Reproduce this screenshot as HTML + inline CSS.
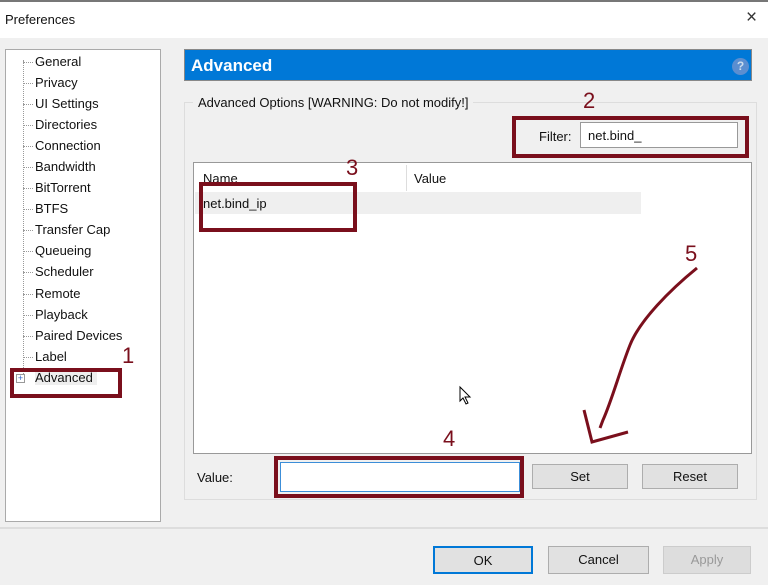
<!DOCTYPE html>
<html><head><style>
*{margin:0;padding:0;box-sizing:border-box}
body{width:768px;height:585px;background:#f0f0f0;font-family:"Liberation Sans",sans-serif;font-size:13px;color:#111;position:relative;overflow:hidden}
.a{position:absolute}
.tree div{position:absolute;left:35px;font-size:13px}
.tree span{position:absolute;left:23px;width:10px;border-top:1px dotted #999}
.btn{position:absolute;background:#e1e1e1;border:1px solid #adadad;text-align:center;font-size:13px}
.red{position:absolute;border:4px solid #7a0f1c}
.num{position:absolute;color:#7a0f1c;font-size:22px}
</style></head><body>
<div class="a" style="left:0;top:0;width:768px;height:38px;background:#fff;border-top:2px solid #777"></div>
<div class="a" style="left:5px;top:12px;font-size:13px">Preferences</div>
<div class="a" style="left:746px;top:7px;font-size:19px;color:#333">×</div>

<div class="a tree" style="left:5px;top:49px;width:156px;height:473px;background:#fff;border:1px solid #aaa"></div>
<div class="a" style="left:23px;top:60px;height:316px;border-left:1px dotted #999"></div>
<div class="tree">
<div style="top:54px">General</div><span style="top:62px"></span>
<div style="top:75px">Privacy</div><span style="top:83px"></span>
<div style="top:96px">UI Settings</div><span style="top:104px"></span>
<div style="top:117px">Directories</div><span style="top:125px"></span>
<div style="top:138px">Connection</div><span style="top:146px"></span>
<div style="top:159px">Bandwidth</div><span style="top:167px"></span>
<div style="top:180px">BitTorrent</div><span style="top:188px"></span>
<div style="top:201px">BTFS</div><span style="top:209px"></span>
<div style="top:222px">Transfer Cap</div><span style="top:230px"></span>
<div style="top:243px">Queueing</div><span style="top:251px"></span>
<div style="top:264px">Scheduler</div><span style="top:272px"></span>
<div style="top:286px">Remote</div><span style="top:294px"></span>
<div style="top:307px">Playback</div><span style="top:315px"></span>
<div style="top:328px">Paired Devices</div><span style="top:336px"></span>
<div style="top:349px">Label</div><span style="top:357px"></span>
<div style="top:370px;background:#eee;padding-right:4px">Advanced</div>
</div>
<div class="a" style="left:16px;top:374px;width:9px;height:9px;border:1px solid #999;background:#fff;font-size:9px;line-height:7px;text-align:center;color:#36c">+</div>
<div class="red" style="left:10px;top:368px;width:112px;height:30px"></div>
<div class="num" style="left:122px;top:343px">1</div>

<div class="a" style="left:184px;top:49px;width:568px;height:32px;background:#0078d7;border:1px solid #888"></div>
<div class="a" style="left:191px;top:56px;color:#fff;font-weight:bold;font-size:17px">Advanced</div>
<div class="a" style="left:732px;top:58px;width:17px;height:17px;border-radius:50%;background:#5b8ed0;color:#cde;font-size:12px;text-align:center;line-height:17px;font-weight:bold">?</div>

<div class="a" style="left:184px;top:102px;width:573px;height:398px;border:1px solid #ddd"></div>
<div class="a" style="left:193px;top:95px;background:#f0f0f0;padding:0 5px">Advanced Options [WARNING: Do not modify!]</div>
<div class="num" style="left:583px;top:88px">2</div>
<div class="a" style="left:539px;top:129px">Filter:</div>
<div class="a" style="left:580px;top:122px;width:158px;height:26px;background:#fff;border:1px solid #999;padding:5px 7px">net.bind_</div>
<div class="red" style="left:512px;top:116px;width:237px;height:42px"></div>

<div class="a" style="left:193px;top:162px;width:559px;height:292px;background:#fff;border:1px solid #999"></div>
<div class="a" style="left:406px;top:165px;width:1px;height:26px;background:#ddd"></div>
<div class="a" style="left:203px;top:171px">Name</div>
<div class="a" style="left:414px;top:171px">Value</div>
<div class="a" style="left:195px;top:192px;width:446px;height:22px;background:#efefef"></div>
<div class="a" style="left:203px;top:196px">net.bind_ip</div>
<div class="red" style="left:199px;top:182px;width:158px;height:50px"></div>
<div class="num" style="left:346px;top:155px">3</div>

<svg class="a" style="left:0;top:0" width="768" height="585">
<path d="M697 268 C670 290 640 320 630 345 C620 370 612 400 603 420 L600 428" fill="none" stroke="#7a0f1c" stroke-width="3"/>
<path d="M584 410 L592 442 L628 432" fill="none" stroke="#7a0f1c" stroke-width="3"/>
<path d="M460 387 L460 401 L463 398 L466 404 L468 403 L465 397 L470 397 Z" fill="#fff" stroke="#000" stroke-width="1"/>
</svg>
<div class="num" style="left:685px;top:241px">5</div>
<div class="num" style="left:443px;top:426px">4</div>

<div class="a" style="left:197px;top:470px">Value:</div>
<div class="a" style="left:280px;top:462px;width:240px;height:30px;background:#fff;border:1px solid #3c8ed8"></div>
<div class="red" style="left:274px;top:456px;width:250px;height:42px"></div>
<div class="btn" style="left:532px;top:464px;width:96px;height:25px;line-height:23px">Set</div>
<div class="btn" style="left:642px;top:464px;width:96px;height:25px;line-height:23px">Reset</div>

<div class="a" style="left:0;top:527px;width:768px;height:2px;background:#ddd"></div>
<div class="btn" style="left:433px;top:546px;width:100px;height:28px;line-height:26px;border:2px solid #0078d7">OK</div>
<div class="btn" style="left:548px;top:546px;width:101px;height:28px;line-height:26px">Cancel</div>
<div class="btn" style="left:663px;top:546px;width:88px;height:28px;line-height:26px;color:#999;border-color:#ccc;background:#ddd">Apply</div>
</body></html>
